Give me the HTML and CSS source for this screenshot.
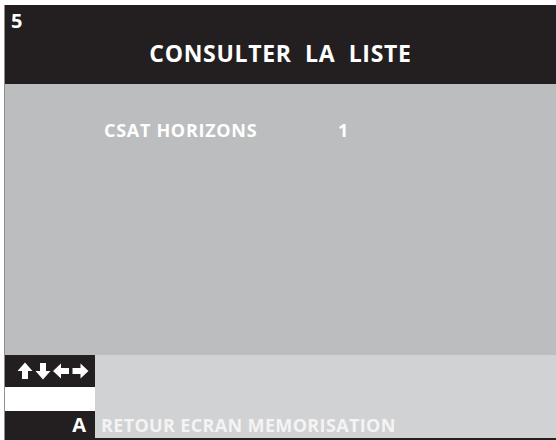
FILE: index.html
```html
<!DOCTYPE html>
<html>
<head>
<meta charset="utf-8">
<link rel="stylesheet" href="styles.css">
</head>
<body>
<div class="screen">
  <header class="header">
    <div class="page-num">5</div>
    <h1 class="title">CONSULTER&nbsp; LA&nbsp; LISTE</h1>
  </header>
  <main class="main">
    <div class="row">
      <span class="row-name">CSAT HORIZONS</span>
      <span class="row-val">1</span>
    </div>
  </main>
  <footer class="footer">
    <div class="key key-arrows">
      <svg width="72" height="18" viewBox="0 0 72 18">
        <g fill="#fff">
          <path d="M8 0.5 L15.5 9 L11 9 L11 17 L5 17 L5 9 L0.5 9 Z"/>
          <path d="M26 17.5 L33.5 9 L29 9 L29 1 L23 1 L23 9 L18.5 9 Z"/>
          <path d="M36 9 L44 1.5 L44 6 L52 6 L52 12 L44 12 L44 16.5 Z"/>
          <path d="M71.5 9 L63.5 1.5 L63.5 6 L55.5 6 L55.5 12 L63.5 12 L63.5 16.5 Z"/>
        </g>
      </svg>
    </div>
    <div class="label"></div>
    <div class="key key-blank"></div>
    <div class="label"></div>
    <div class="key key-a">A</div>
    <div class="label label-text">RETOUR ECRAN MEMORISATION</div>
  </footer>
</div>
</body>
</html>
```
FILE: styles.css
```css
html, body {
  margin: 0;
  padding: 0;
  background: #ffffff;
}
body {
  font-family: "Open Sans", Lato, sans-serif;
}
.screen {
  margin-top: 5px;
  margin-left: 4px;
  border-left: 1px solid #8f8f8f;
  height: 435px;
  display: flex;
  flex-direction: column;
}
.header {
  height: 79px;
  background: #231f20;
  color: #fff;
  position: relative;
}
.page-num {
  position: absolute;
  left: 6px;
  top: 5px;
  font-weight: 700;
  font-size: 20px;
  line-height: 22px;
}
.title {
  margin: 0;
  padding-top: 34px;
  text-align: center;
  font-weight: 700;
  font-size: 23px;
  line-height: 28px;
  letter-spacing: 0.7px;
}
.main {
  height: 273px;
  background: #bcbdbf;
  color: #fff;
}
.row {
  display: flex;
  padding-top: 35px;
  padding-left: 99px;
  font-weight: 700;
  font-size: 18px;
  line-height: 22px;
}
.row-name {
  width: 234px;
  letter-spacing: 0.7px;
}
.footer {
  flex: 1;
  background: #d1d2d4;
  display: grid;
  grid-template-columns: 90px 1fr;
  grid-template-rows: 32px 24px 1fr;
  border-bottom: 2px solid #231f20;
}
.key {
  background: #231f20;
  color: #fff;
}
.key-arrows {
  display: flex;
  align-items: center;
  padding-left: 12px;
}
.key-blank {
  background: #ffffff;
}
.key-a {
  text-align: right;
  padding-right: 9px;
  font-weight: 700;
  font-size: 20px;
  line-height: 26px;
  padding-top: 1px;
}
.label-text {
  color: #f4f4f4;
  font-weight: 700;
  font-size: 18px;
  line-height: 26px;
  padding-left: 6px;
  padding-top: 1px;
  letter-spacing: 0.35px;
}
```
